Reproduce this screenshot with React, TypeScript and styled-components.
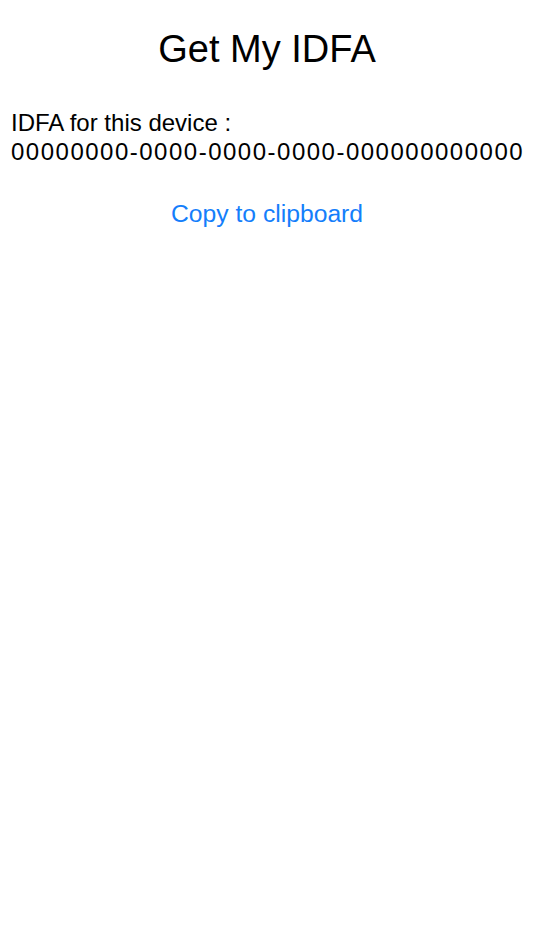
import React, { useState } from "react";
import styled, { createGlobalStyle } from "styled-components";

const GlobalStyle = createGlobalStyle`
  html, body {
    margin: 0;
    padding: 0;
    background: #ffffff;
  }
  body {
    font-family: "Liberation Sans", Arial, sans-serif;
    color: #000000;
  }
`;

const Screen = styled.div`
  display: flex;
  flex-direction: column;
  min-height: 950px;
  padding-top: 27px;
  box-sizing: border-box;
`;

const Title = styled.h1`
  margin: 0;
  font-size: 38px;
  line-height: 44px;
  font-weight: 400;
  text-align: center;
`;

const InfoBlock = styled.div`
  margin-top: 37px;
  padding: 0 11px;
  font-size: 24px;
  line-height: 29px;
`;

const Label = styled.div`
  white-space: nowrap;
`;

const IdValue = styled.div`
  white-space: nowrap;
  letter-spacing: 1.5px;
`;

const CopyButton = styled.button`
  align-self: center;
  margin-top: 33px;
  padding: 0;
  border: none;
  background: none;
  font-family: inherit;
  font-size: 24.7px;
  line-height: 29px;
  color: #147efb;
  cursor: pointer;
`;

const IDFA = "00000000-0000-0000-0000-000000000000";

const App = (): JSX.Element => {
  const [copied, setCopied] = useState<boolean>(false);

  const handleCopy = () => {
    navigator.clipboard?.writeText(IDFA).catch(() => {});
    setCopied(true);
  };

  return (
    <>
      <GlobalStyle />
      <Screen>
        <Title>Get My IDFA</Title>
        <InfoBlock>
          <Label>IDFA for this device :</Label>
          <IdValue>{IDFA}</IdValue>
        </InfoBlock>
        <CopyButton onClick={handleCopy} data-copied={copied}>
          Copy to clipboard
        </CopyButton>
      </Screen>
    </>
  );
};

export default App;
